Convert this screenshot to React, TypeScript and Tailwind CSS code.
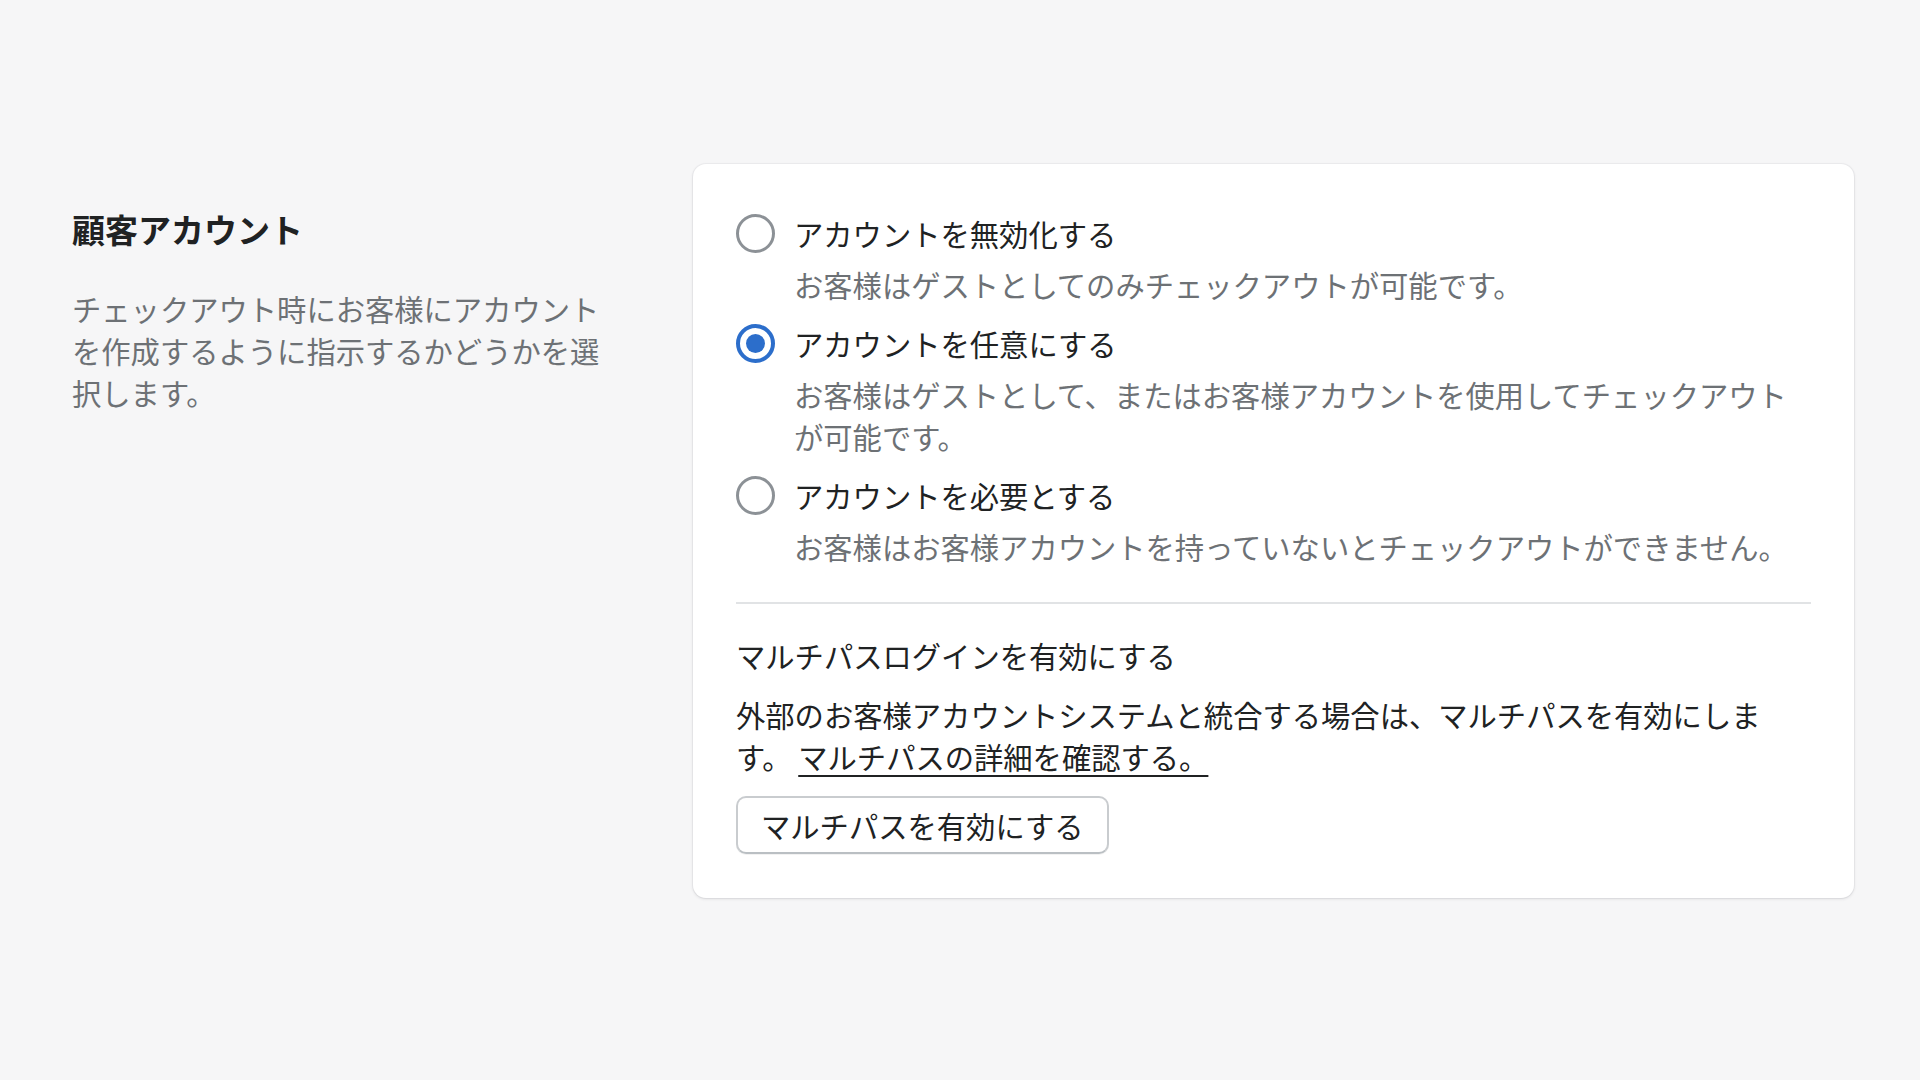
const font = { fontFamily: '"Noto Sans CJK JP", "Noto Sans", sans-serif' };

type Choice = { label: string; help: string; checked?: boolean };

const choices: Choice[] = [
  { label: 'アカウントを無効化する', help: 'お客様はゲストとしてのみチェックアウトが可能です。' },
  {
    label: 'アカウントを任意にする',
    help: 'お客様はゲストとして、またはお客様アカウントを使用してチェックアウトが可能です。',
    checked: true,
  },
  { label: 'アカウントを必要とする', help: 'お客様はお客様アカウントを持っていないとチェックアウトができません。' },
];

function Radio({ checked }: { checked?: boolean }) {
  if (checked) {
    return (
      <span className="flex h-[39px] w-[39px] shrink-0 items-center justify-center rounded-full border-[4px] border-[#2c6ecb] bg-white">
        <span className="h-[19px] w-[19px] rounded-full bg-[#2c6ecb]" />
      </span>
    );
  }
  return <span className="h-[39px] w-[39px] shrink-0 rounded-full border-[3px] border-[#8c9196] bg-white" />;
}

function ChoiceRow({ c }: { c: Choice }) {
  return (
    <li className="flex flex-col">
      <label className="flex items-center gap-[19px]">
        <Radio checked={c.checked} />
        <span className="text-[29.3px] leading-[42px] text-[#202223]">{c.label}</span>
      </label>
      <p className="mt-[9px] pl-[58px] text-[29.3px] leading-[42px] text-[#6d7175]">{c.help}</p>
    </li>
  );
}

export default function App() {
  return (
    <div className="min-h-screen bg-[#f6f6f7]" style={font}>
      <div className="flex pl-[72px] pt-[164px]">
        {/* Section description */}
        <div className="w-[540px] shrink-0 pt-[40px]">
          <h2 className="text-[33px] font-semibold leading-[50px] text-[#202223]">顧客アカウント</h2>
          <p className="mt-[33px] text-[29.3px] leading-[42px] text-[#6d7175]">
            チェックアウト時にお客様にアカウントを作成するように指示するかどうかを選択します。
          </p>
        </div>

        {/* Card */}
        <div className="ml-[81px] w-[1161px] rounded-[13px] bg-white px-[43px] pb-[44px] pt-[48px] shadow-[0_0_0_1px_rgba(63,63,68,0.04),0_1px_3px_rgba(63,63,68,0.15)]">
          <ul className="flex flex-col gap-[17px]">
            {choices.map((c) => (
              <ChoiceRow key={c.label} c={c} />
            ))}
          </ul>

          <div className="mt-[35px] h-[2px] bg-[#e1e3e5]" />

          <h3 className="mt-[30px] text-[29.3px] leading-[42px] text-[#202223]">マルチパスログインを有効にする</h3>
          <p className="mt-[17px] text-[29.3px] leading-[42px] text-[#202223]">
            外部のお客様アカウントシステムと統合する場合は、マルチパスを有効にします。{' '}
            <a href="#" className="underline decoration-[2px] underline-offset-[6px]">
              マルチパスの詳細を確認する。{' '}
            </a>
          </p>
          <button className="mt-[19px] flex h-[58px] items-center rounded-[10px] border-[2px] border-[#c9cccf] border-b-[#babfc3] bg-white px-[23px] text-[29.3px] leading-[42px] text-[#202223] shadow-[0_1px_0_rgba(0,0,0,0.05)]">
            マルチパスを有効にする
          </button>
        </div>
      </div>
    </div>
  );
}
